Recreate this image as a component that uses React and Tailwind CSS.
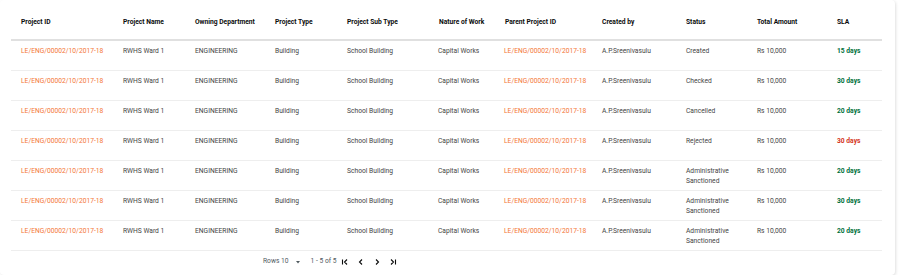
import React from "react";

const COLS = [
  { key: "id", label: "Project ID", w: 102 },
  { key: "name", label: "Project Name", w: 72 },
  { key: "dept", label: "Owning Department", w: 80 },
  { key: "type", label: "Project Type", w: 72 },
  { key: "sub", label: "Project Sub Type", w: 92 },
  { key: "nature", label: "Nature of Work", w: 66 },
  { key: "parent", label: "Parent Project ID", w: 97 },
  { key: "by", label: "Created by", w: 84 },
  { key: "status", label: "Status", w: 71 },
  { key: "amount", label: "Total Amount", w: 80 },
  { key: "sla", label: "SLA", w: 55 },
];

const ROWS = [
  { status: "Created", sla: "15 days", late: false },
  { status: "Checked", sla: "30 days", late: false },
  { status: "Cancelled", sla: "20 days", late: false },
  { status: "Rejected", sla: "30 days", late: true },
  { status: "Administrative Sanctioned", sla: "20 days", late: false },
  { status: "Administrative Sanctioned", sla: "30 days", late: false },
  { status: "Administrative Sanctioned", sla: "20 days", late: false },
];

const PROJECT_ID = "LE/ENG/00002/10/2017-18";

function PageIcon({ kind }) {
  // tiny chevrons used by the pager
  const paths = {
    first: "M1.5 1.5v5M6 1.5L3.5 4 6 6.5",
    prev: "M5 1.5L2.5 4 5 6.5",
    next: "M3 1.5L5.5 4 3 6.5",
    last: "M2 1.5L4.5 4 2 6.5M6.5 1.5v5",
  };
  return (
    <svg width="8" height="8" viewBox="0 0 8 8" className="text-[#0b0c0c]">
      <path d={paths[kind]} fill="none" stroke="currentColor" strokeWidth="1.1" />
    </svg>
  );
}

export default function App() {
  return (
    <div className="h-[275px] w-[900px] bg-white font-['Roboto',sans-serif]">
      <div className="w-[895px] rounded-sm bg-white pt-[2px] pb-[2px] shadow-[1px_1px_3px_rgba(0,0,0,0.12)]">
        <table className="ml-[11px] w-[871px] table-fixed border-collapse text-[6.7px] leading-[10.5px]">
          <colgroup>
            {COLS.map((c) => (
              <col key={c.key} style={{ width: c.w }} />
            ))}
          </colgroup>
          <thead>
            <tr className="h-[38px] border-b-2 border-[#e0e0e0]">
              {COLS.map((c) => (
                <th key={c.key} className="pl-[10px] pt-[4px] text-left align-middle font-bold text-[#0b0c0c]">
                  {c.label}
                </th>
              ))}
            </tr>
          </thead>
          <tbody className="text-[#454545]">
            {ROWS.map((r, i) => (
              <tr key={i} className="h-[30px] border-b border-[#eeeeee] align-top">
                <td className="pl-[10px] pt-[5px] text-[#f47738]">{PROJECT_ID}</td>
                <td className="pl-[10px] pt-[5px]">RWHS Ward 1</td>
                <td className="pl-[10px] pt-[5px]">ENGINEERING</td>
                <td className="pl-[10px] pt-[5px]">Building</td>
                <td className="pl-[10px] pt-[5px]">School Building</td>
                <td className="pl-[9px] pt-[5px]">Capital Works</td>
                <td className="pl-[9px] pt-[5px] text-[#f47738]">{PROJECT_ID}</td>
                <td className="pl-[10px] pt-[5px]">A.P.Sreenivasulu</td>
                <td className="pl-[10px] pt-[5px] pr-[14px]">{r.status}</td>
                <td className="pl-[10px] pt-[5px]">Rs 10,000</td>
                <td
                  className={`pl-[10px] pt-[5px] font-bold ${
                    r.late ? "text-[#d4351c]" : "text-[#00703c]"
                  }`}
                >
                  {r.sla}
                </td>
              </tr>
            ))}
          </tbody>
        </table>
        <div className="flex h-[22px] items-center pl-[263px] text-[6.7px] text-[#505a5f]">
          <span>Rows 10</span>
          <svg width="6" height="6" viewBox="0 0 6 6" className="ml-[6px]">
            <path d="M1 2h4L3 4.5z" fill="#505a5f" />
          </svg>
          <span className="ml-[10px]">1 - 5 of 5</span>
          <div className="ml-[4px] flex items-center gap-[8px]">
            <PageIcon kind="first" />
            <PageIcon kind="prev" />
            <PageIcon kind="next" />
            <PageIcon kind="last" />
          </div>
        </div>
      </div>
    </div>
  );
}
